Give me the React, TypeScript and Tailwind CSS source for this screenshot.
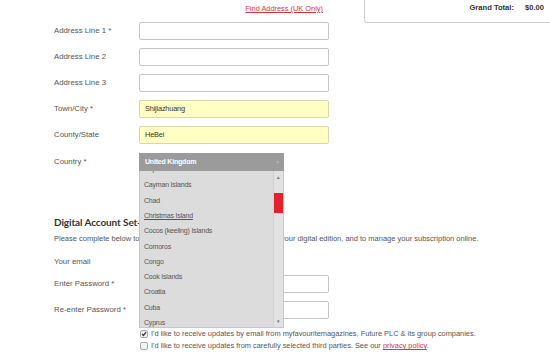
import { ReactNode } from 'react';

const countries = [
  'Cayman Islands',
  'Chad',
  'Christmas Island',
  'Cocos (keeling) Islands',
  'Comoros',
  'Congo',
  'Cook Islands',
  'Croatia',
  'Cuba',
  'Cyprus',
];

function FieldRow({ label, children, className = '' }: { label: string; children?: ReactNode; className?: string }) {
  return (
    <div className={`flex items-center h-[18px] ${className}`}>
      <div className="w-[85px] shrink-0 text-[7.8px] text-[#555]">{label}</div>
      {children}
    </div>
  );
}

function TextInput({ value, filled }: { value?: string; filled?: boolean }) {
  return (
    <div
      className={`w-[190px] h-[18px] rounded-[2px] border flex items-center px-[5px] text-[7.4px] tracking-[-0.2px] text-[#333] ${
        filled ? 'bg-[#ffffc4] border-[#d8d8a8]' : 'bg-white border-[#c4c4c4]'
      }`}
    >
      {value}
    </div>
  );
}

function CountryDropdown() {
  return (
    <div className="absolute left-[139px] top-[153px] w-[145px] text-[7px] tracking-[-0.2px]">
      <div className="h-[18px] bg-[#9b9b9b] flex items-center justify-between pl-[6px] pr-[5px]">
        <span className="font-bold text-white">United Kingdom</span>
        <span className="text-[#b4b4b4] text-[6px]">▾</span>
      </div>
      <div className="h-[157px] border border-t-0 border-[#b9c9de] bg-[#dcdcdc] flex overflow-hidden">
        <div className="flex-1 overflow-hidden">
          {/* previous item, scrolled almost out of view */}
          <div className="h-[2px] overflow-hidden pl-[4px] text-[#555]">
            <div className="leading-[7px] -mt-[6px]">Cape Verde</div>
          </div>
          <div className="mt-[5px]">
            {countries.map((c) => (
              <div key={c} className="h-[15.3px] flex items-center pl-[4px] text-[#555]">
                <span className={c === 'Christmas Island' ? 'underline' : ''}>{c}</span>
              </div>
            ))}
          </div>
        </div>
        <div className="w-[10px] bg-[#e2e2e2] border-l border-[#cfcfcf] flex flex-col">
          <div className="h-[14px] flex items-center justify-center text-[5px] text-[#666]">▴</div>
          <div className="h-[20px] mt-[8px] bg-[#e3222b]" />
          <div className="flex-1" />
          <div className="h-[10px] flex items-center justify-center text-[5px] text-[#666]">▾</div>
        </div>
      </div>
    </div>
  );
}

function Checkbox({ checked }: { checked?: boolean }) {
  return (
    <span className="w-[8px] h-[8px] rounded-[2px] border border-[#aaa] bg-[#f2f2f2] flex items-center justify-center shrink-0">
      {checked && (
        <svg width="6" height="6" viewBox="0 0 6 6">
          <path d="M1 3 L2.5 4.5 L5 1.2" stroke="#333" strokeWidth="1.3" fill="none" />
        </svg>
      )}
    </span>
  );
}

export default function App() {
  return (
    <div
      className="relative w-[550px] h-[364px] overflow-hidden bg-white flex items-start"
      style={{ fontFamily: '"Liberation Sans", Arial, sans-serif' }}
    >
      <div className="w-[364px] shrink-0 pl-[54px]">
        <div className="h-[22px] w-[275px] flex justify-end pr-[6px] pt-[4px]">
          <a className="text-[7.4px] leading-[10px] text-[#d3353f] underline">Find Address (UK Only)</a>
        </div>
        <div className="flex flex-col gap-[8px]">
          <FieldRow label="Address Line 1 *">
            <TextInput />
          </FieldRow>
          <FieldRow label="Address Line 2">
            <TextInput />
          </FieldRow>
          <FieldRow label="Address Line 3">
            <TextInput />
          </FieldRow>
          <FieldRow label="Town/City *">
            <TextInput value="Shijiazhuang" filled />
          </FieldRow>
          <FieldRow label="County/State">
            <TextInput value="HeBei" filled />
          </FieldRow>
        </div>
        <FieldRow label="Country *" className="mt-[9px]" />

        <h2
          className="mt-[43px] text-[10px] leading-[16px] font-bold tracking-[-0.1px] text-[#333]"
          style={{ fontFamily: 'Lato, "Liberation Sans", sans-serif' }}
        >
          Digital Account Set-up
        </h2>
        <p className="mt-[3px] text-[7.5px] leading-[11px] text-[#555] whitespace-nowrap">
          Please complete below to set up your account, giving you access to your digital edition, and to manage your subscription online.
        </p>

        <div className="mt-[11px] h-[14px] flex items-center text-[7.8px] text-[#555]">Your email</div>
        <div className="mt-[6px] flex flex-col gap-[8px]">
          <FieldRow label="Enter Password *">
            <TextInput />
          </FieldRow>
          <FieldRow label="Re-enter Password *">
            <TextInput />
          </FieldRow>
        </div>

        <div className="mt-[9px] pl-[86px] flex flex-col text-[7.4px] text-[#555] whitespace-nowrap">
          <label className="h-[12px] flex items-center gap-[3px]">
            <Checkbox checked />
            <span>I'd like to receive updates by email from myfavouritemagazines, Future PLC &amp; its group companies.</span>
          </label>
          <label className="h-[12px] flex items-center gap-[3px]">
            <Checkbox />
            <span>
              I'd like to receive updates from carefully selected third parties. See our{' '}
              <a className="text-[#d3353f] underline">privacy policy</a>.
            </span>
          </label>
        </div>
      </div>

      <div className="flex-1 h-[23px] border-l border-b border-[#cfcfcf] rounded-bl-[3px] flex justify-end items-start pt-[2px] pr-[6px] text-[7.6px] text-[#333]">
        <span className="font-bold">Grand Total:</span>
        <span className="ml-[11px] font-bold">$0.00</span>
      </div>

      <CountryDropdown />
    </div>
  );
}
